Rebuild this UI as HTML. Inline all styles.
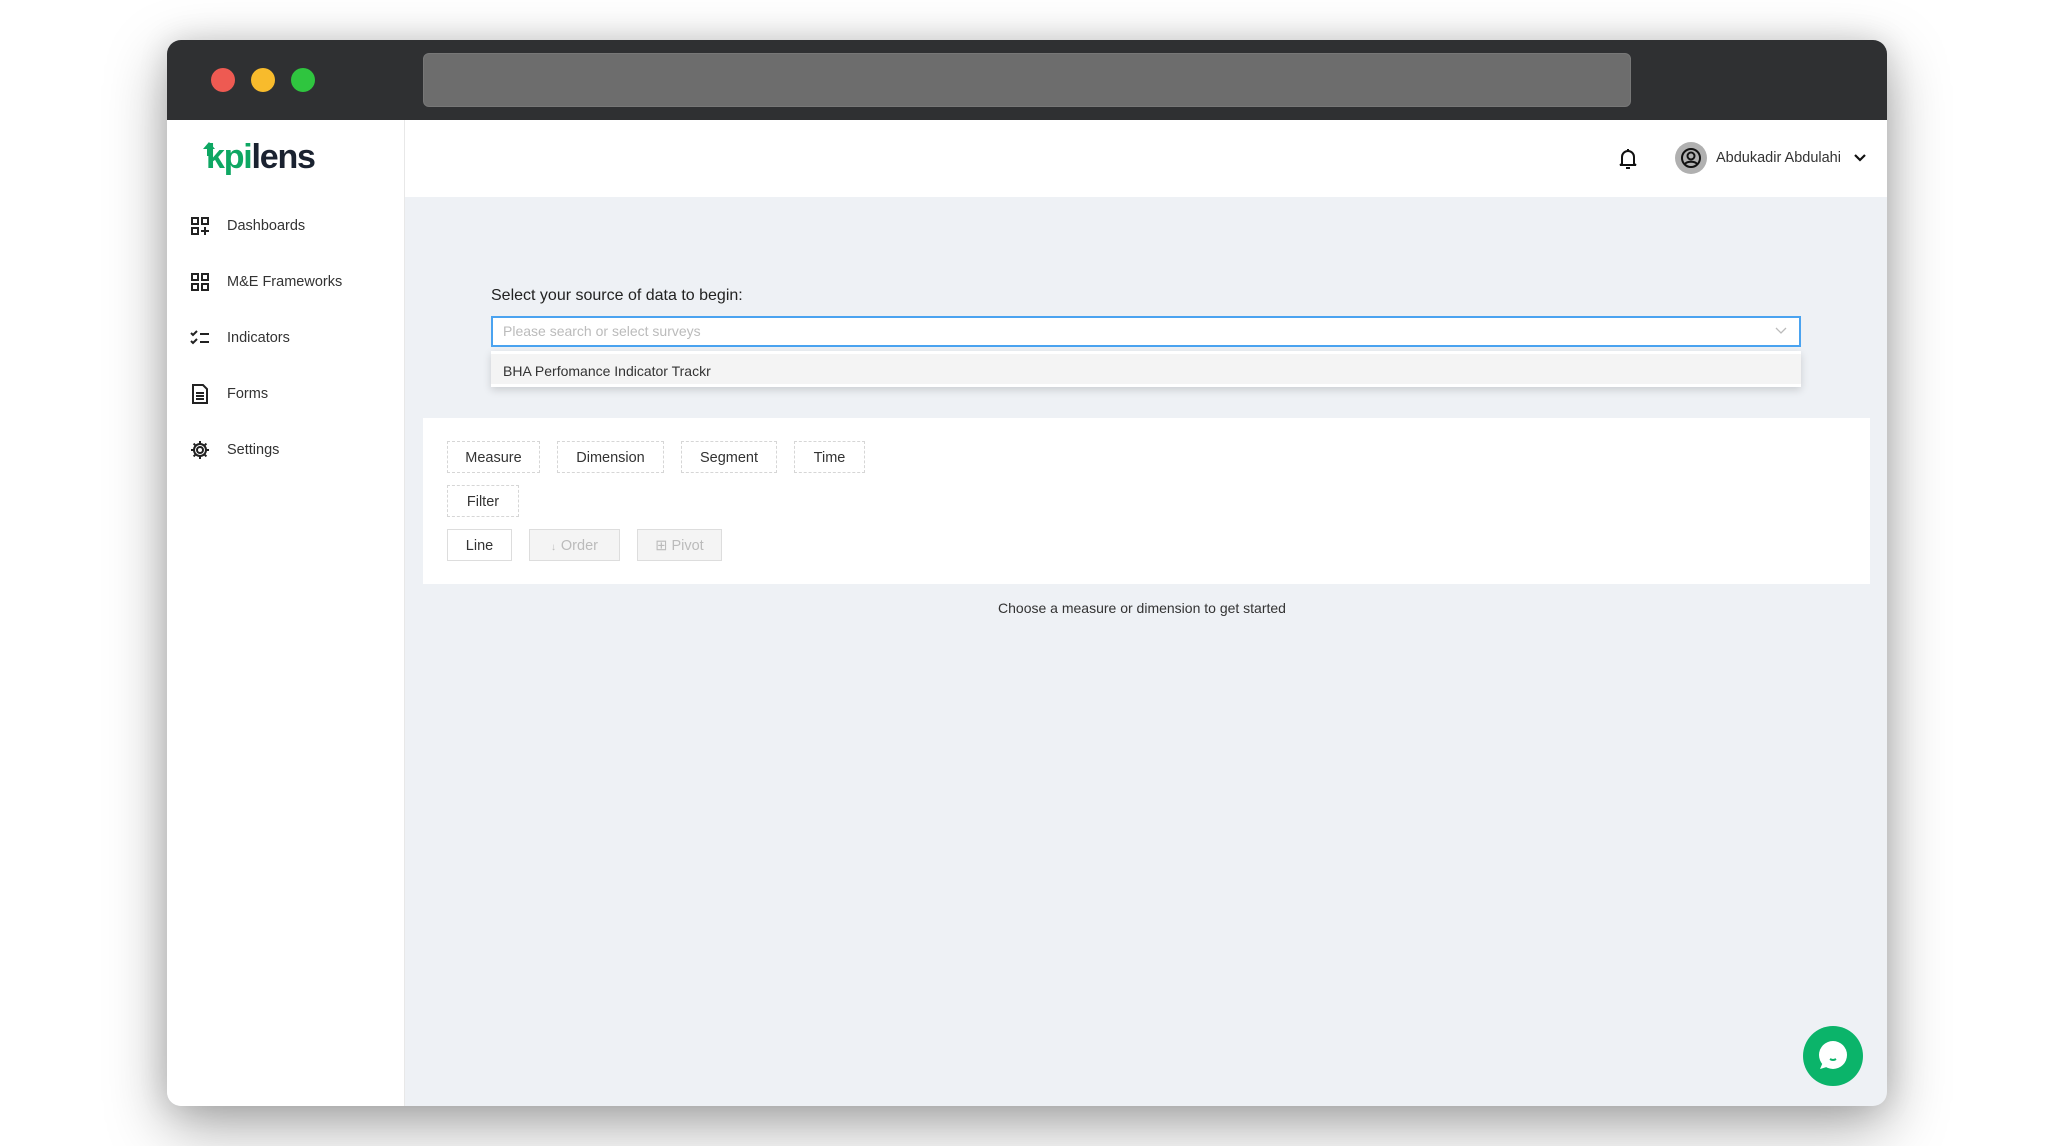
<!DOCTYPE html>
<html><head><meta charset="utf-8"><style>
*{box-sizing:border-box;margin:0;padding:0}
body{width:2054px;height:1146px;background:#fff;position:relative;overflow:hidden;font-family:"Liberation Sans",sans-serif;color:#222}
.win{position:absolute;left:167px;top:40px;width:1720px;height:1066px;border-radius:14px;overflow:hidden;box-shadow:0 20px 60px rgba(0,0,0,.35),0 0 30px rgba(0,0,0,.12);background:#eef1f5}
.title{position:absolute;left:0;top:0;width:100%;height:80px;background:#2f3032}
.dot{position:absolute;top:28px;width:24px;height:24px;border-radius:50%}
.url{position:absolute;left:256px;top:13px;width:1208px;height:54px;background:#6d6d6d;border-radius:6px;border:1px solid #777}
.side{position:absolute;left:0;top:80px;width:238px;bottom:0;background:#fff;border-right:1px solid #e8e8e8}
.logo{position:absolute;left:39px;top:18px;font-size:34px;font-weight:bold;letter-spacing:-1.2px}
.nav{position:absolute;left:23px;font-size:14.5px;color:#333;display:flex;align-items:center}
.nav svg{width:20px;height:20px;margin-right:17px}
.hdr{position:absolute;left:238px;top:80px;right:0;height:77px;background:#fff}
.lbl{position:absolute;left:324px;top:247px;font-size:16px;color:#222}
.inp{position:absolute;left:324px;top:276px;width:1310px;height:31px;border:2px solid #4aa3f0;background:#fff;font-size:14px;color:#bbb;padding:5px 10px}
.dd{position:absolute;left:324px;top:311px;width:1310px;height:36px;background:#f4f4f4;box-shadow:0 3px 8px rgba(0,0,0,.15);font-size:14px;color:#333;padding:9px 12px;border-top:3px solid #fff;border-bottom:3px solid #fff}
.panel{position:absolute;left:256px;top:378px;width:1447px;height:166px;background:#fff}
.b{position:absolute;height:32px;border:1px dashed #d6d6d6;font-size:14.5px;color:#333;text-align:center;line-height:32px}
.s{border:1px solid #ddd}
.dis{background:#f4f4f4;color:#bbb;border:1px solid #ddd}
</style></head><body>
<div class="win">
 <div class="title">
  <div class="dot" style="left:44px;background:#ee5a52"></div>
  <div class="dot" style="left:84px;background:#f8bb2c"></div>
  <div class="dot" style="left:124px;background:#2fc53f"></div>
  <div class="url"></div>
 </div>
 <div class="side">
  <div class="logo"><span style="color:#0ea763">kpi</span><span style="color:#1a2230">lens</span></div>
  <svg style="position:absolute;left:35px;top:22px" width="14" height="14" viewBox="0 0 14 14" fill="#0ea763"><path d="M7 0l6 7H9v7H5V7H1z"/></svg>
  <div class="nav" style="top:96px"><svg viewBox="0 0 20 20" fill="none" stroke="#222" stroke-width="2"><rect x="2" y="2" width="6" height="6"/><rect x="12" y="2" width="6" height="6"/><rect x="2" y="12" width="6" height="6"/><path d="M15 11v8M11 15h8"/></svg>Dashboards</div>
  <div class="nav" style="top:152px"><svg viewBox="0 0 20 20" fill="none" stroke="#222" stroke-width="2"><rect x="2" y="2" width="6" height="6"/><rect x="12" y="2" width="6" height="6"/><rect x="2" y="12" width="6" height="6"/><rect x="12" y="12" width="6" height="6"/></svg>M&amp;E Frameworks</div>
  <div class="nav" style="top:208px"><svg viewBox="0 0 20 20" fill="none" stroke="#222" stroke-width="2"><path d="M1 5l2 2 4-4M1 13l2 2 4-4M10 6h9M10 14h9"/></svg>Indicators</div>
  <div class="nav" style="top:264px"><svg viewBox="0 0 20 20" fill="none" stroke="#222" stroke-width="2"><path d="M3 1h10l4 4v14H3z"/><path d="M6 9h8M6 12h8M6 15h8"/></svg>Forms</div>
  <div class="nav" style="top:320px"><svg viewBox="0 0 20 20" fill="none" stroke="#222" stroke-width="2"><circle cx="10" cy="10" r="3"/><path d="M10 1v3M10 16v3M1 10h3M16 10h3M3.6 3.6l2.1 2.1M14.3 14.3l2.1 2.1M3.6 16.4l2.1-2.1M14.3 5.7l2.1-2.1"/><circle cx="10" cy="10" r="6"/></svg>Settings</div>
 </div>
 <div class="hdr">
  <svg style="position:absolute;left:1214px;top:28px" width="18" height="22" viewBox="0 0 18 22" fill="none" stroke="#111" stroke-width="2"><path d="M3 16V9a6 6 0 0112 0v7l2 1H1z"/><path d="M7 20h4"/><path d="M9 1v2"/></svg>
  <div style="position:absolute;left:1270px;top:22px;width:32px;height:32px;border-radius:50%;background:#b0b0b0"><svg width="32" height="32" viewBox="0 0 32 32" fill="none" stroke="#111" stroke-width="2"><circle cx="16" cy="16" r="9"/><circle cx="16" cy="14" r="3.5"/><path d="M10 22c2-3 10-3 12 0"/></svg></div>
  <div style="position:absolute;left:1311px;top:30px;font-size:14.5px;color:#333">Abdukadir Abdulahi</div>
  <svg style="position:absolute;left:1448px;top:33px" width="14" height="10" viewBox="0 0 14 10" fill="none" stroke="#111" stroke-width="2.2"><path d="M2 2l5 5 5-5"/></svg>
 </div>
 <div class="lbl">Select your source of data to begin:</div>
 <div class="inp">Please search or select surveys<svg style="position:absolute;right:12px;top:9px" width="12" height="8" viewBox="0 0 12 8" fill="none" stroke="#bbb" stroke-width="1.3"><path d="M1 1l5 5 5-5"/></svg></div>
 <div class="dd">BHA Perfomance Indicator Trackr</div>
 <div class="panel">
  <div class="b" style="left:24px;top:23px;width:93px">Measure</div>
  <div class="b" style="left:134px;top:23px;width:107px">Dimension</div>
  <div class="b" style="left:258px;top:23px;width:96px">Segment</div>
  <div class="b" style="left:371px;top:23px;width:71px">Time</div>
  <div class="b" style="left:24px;top:67px;width:72px">Filter</div>
  <div class="b s" style="left:24px;top:111px;width:65px">Line</div>
  <div class="b dis" style="left:106px;top:111px;width:91px"><span style="font-size:10px">↓&#8202;</span> Order</div>
  <div class="b dis" style="left:214px;top:111px;width:85px">⊞ Pivot</div>
 </div>
 <div style="position:absolute;left:0;width:1720px;padding-left:238px;top:560px;text-align:center;font-size:14px;color:#333"><span style="position:relative;left:-4px">Choose a measure or dimension to get started</span></div>
 <div style="position:absolute;left:1636px;top:986px;width:60px;height:60px;border-radius:50%;background:#0bb46a"><svg width="60" height="60" viewBox="0 0 60 60"><circle cx="30" cy="29" r="14" fill="#fff"/><path d="M20 36l-3 7 10-3z" fill="#fff"/><path d="M27 33q3 2 6 0" stroke="#0bb46a" stroke-width="2" fill="none"/></svg></div>
</div>
</body></html>
